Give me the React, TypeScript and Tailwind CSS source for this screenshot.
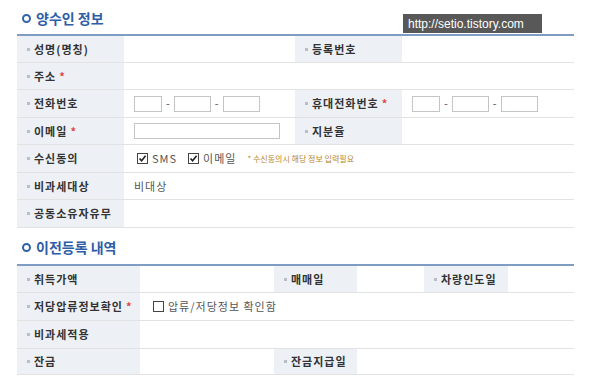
import React from 'react';

const font = { fontFamily: '"Noto Sans CJK KR", "Noto Sans", sans-serif' };

const SectionTitle: React.FC<{ text: string; className?: string }> = ({ text, className }) => (
  <div className={`flex items-center gap-[5px] pl-[5px] ${className ?? ''}`}>
    <span className="w-[9px] h-[9px] rounded-full border-2 border-[#2f63aa]" />
    <span className="text-[14px] font-bold text-[#2d5ea7]">{text}</span>
  </div>
);

const Label: React.FC<{ text: string; required?: boolean; className?: string }> = ({ text, required, className }) => (
  <div className={`bg-[#edf1f6] flex items-center pl-[10px] ${className ?? ''}`}>
    <span className="w-[3px] h-[3px] bg-[#b8bec6] mr-[4px]" />
    <span className="text-[11px] font-bold text-[#333] tracking-[1px]">{text}</span>
    {required && <span className="text-[#e2463f] text-[11px] font-bold ml-[3px] leading-none">*</span>}
  </div>
);

const Input: React.FC<{ w: string }> = ({ w }) => (
  <span className={`${w} h-[16px] border border-[#c4c4c4] bg-white inline-block`} />
);

const Phone: React.FC = () => (
  <div className="flex items-center pl-[10px]">
    <Input w="w-[28px]" />
    <span className="mx-[4px] text-[11px] text-[#555]">-</span>
    <Input w="w-[37px]" />
    <span className="mx-[4px] text-[11px] text-[#555]">-</span>
    <Input w="w-[37px]" />
  </div>
);

const Check: React.FC<{ checked?: boolean }> = ({ checked }) => (
  <span className="w-[11px] h-[11px] border border-[#444] bg-white flex items-center justify-center">
    {checked && (
      <svg width="9" height="9" viewBox="0 0 9 9">
        <path d="M1.5 4.5 L3.6 6.8 L7.6 1.8" fill="none" stroke="#222" strokeWidth="1.6" />
      </svg>
    )}
  </span>
);

export default function App() {
  return (
    <div className="relative w-[595px] h-[387px] bg-white overflow-hidden" style={font}>
      <div className="absolute left-[403px] top-[14px] w-[139px] h-[19px] bg-[#585858] flex items-center pl-[5px] text-white text-[12px]" style={{ fontFamily: '"Liberation Sans", sans-serif' }}>
        http://setio.tistory.com
      </div>

      <div className="pl-[17px] w-[574px]">
        <SectionTitle text="양수인 정보" className="h-[34px] pt-[2px]" />
        <div className="border-t-2 border-[#7f9dc4]">
          <div className="grid grid-cols-[107px_171px_107px_172px] h-[27px] border-b border-[#e2e2e2]">
            <Label text="성명(명칭)" />
            <div />
            <Label text="등록번호" />
            <div />
          </div>
          <div className="grid grid-cols-[107px_1fr] h-[27px] border-b border-[#e2e2e2]">
            <Label text="주소" required />
            <div />
          </div>
          <div className="grid grid-cols-[107px_171px_107px_172px] h-[28px] border-b border-[#e2e2e2]">
            <Label text="전화번호" />
            <Phone />
            <Label text="휴대전화번호" required />
            <Phone />
          </div>
          <div className="grid grid-cols-[107px_171px_107px_172px] h-[27px] border-b border-[#e2e2e2]">
            <Label text="이메일" required />
            <div className="flex items-center pl-[10px]">
              <Input w="w-[146px]" />
            </div>
            <Label text="지분율" />
            <div />
          </div>
          <div className="grid grid-cols-[107px_1fr] h-[28px] border-b border-[#e2e2e2]">
            <Label text="수신동의" />
            <div className="flex items-center pl-[13px] text-[11px] text-[#555]">
              <Check checked />
              <span className="ml-[4px] tracking-[1px]">SMS</span>
              <span className="ml-[11px]"><Check checked /></span>
              <span className="ml-[4px] tracking-[1px]">이메일</span>
              <span className="ml-[11px] text-[8px] text-[#b8862e]">* 수신동의시 해당 정보 입력필요</span>
            </div>
          </div>
          <div className="grid grid-cols-[107px_1fr] h-[27px] border-b border-[#e2e2e2]">
            <Label text="비과세대상" />
            <div className="flex items-center pl-[10px] text-[11px] text-[#555] tracking-[1px]">비대상</div>
          </div>
          <div className="grid grid-cols-[107px_1fr] h-[28px] border-b border-[#e2e2e2]">
            <Label text="공동소유자유무" />
            <div />
          </div>
        </div>

        <SectionTitle text="이전등록 내역" className="h-[36px] pt-[2px]" />
        <div className="border-t-2 border-[#7f9dc4]">
          <div className="grid grid-cols-[123px_134px_83px_67px_84px_66px] h-[27px] border-b border-[#e2e2e2]">
            <Label text="취득가액" />
            <div />
            <Label text="매매일" />
            <div />
            <Label text="차량인도일" />
            <div />
          </div>
          <div className="grid grid-cols-[123px_1fr] h-[28px] border-b border-[#e2e2e2]">
            <Label text="저당압류정보확인" required />
            <div className="flex items-center pl-[13px] text-[11px] text-[#555] tracking-[1px]">
              <Check />
              <span className="ml-[4px]">압류/저당정보 확인함</span>
            </div>
          </div>
          <div className="grid grid-cols-[123px_1fr] h-[28px] border-b border-[#e2e2e2]">
            <Label text="비과세적용" />
            <div />
          </div>
          <div className="grid grid-cols-[123px_134px_83px_1fr] h-[26px] border-b border-[#e2e2e2]">
            <Label text="잔금" />
            <div />
            <Label text="잔금지급일" />
            <div />
          </div>
        </div>
      </div>
    </div>
  );
}
